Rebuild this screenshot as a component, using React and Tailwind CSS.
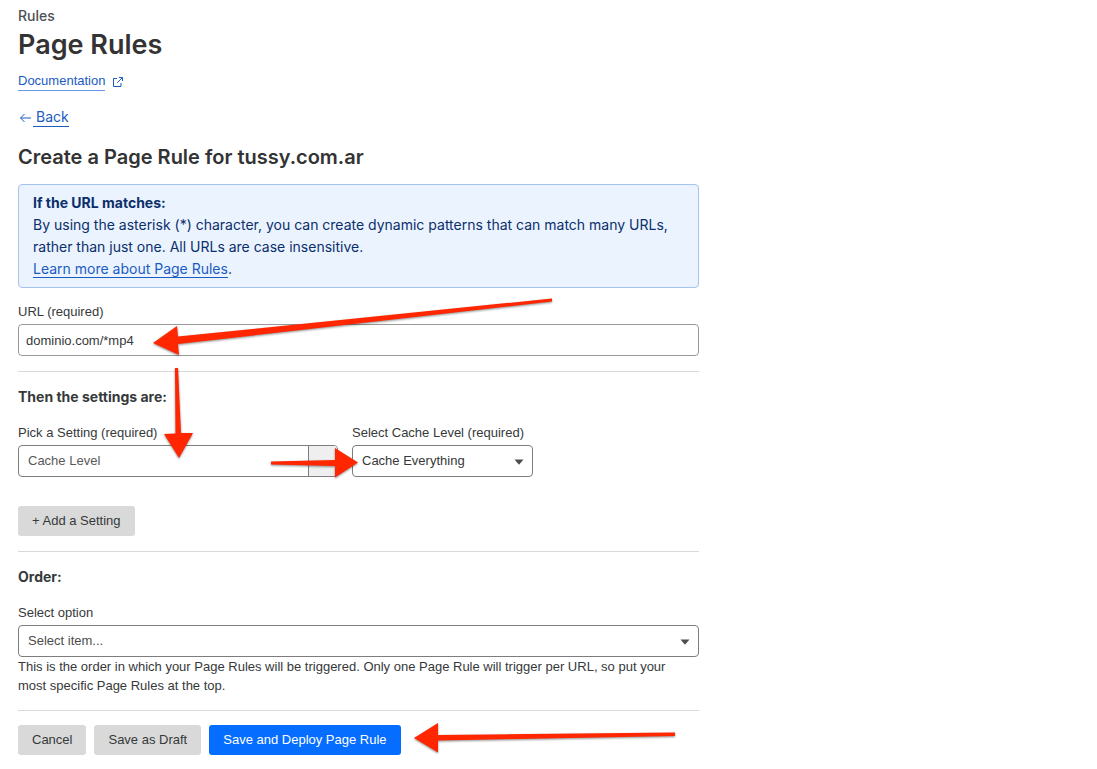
import { useState } from 'react';

const arrows = [
  '153,343 177,326 178,336.5 552,298.5 552,301.5 178,344 179,355',
  '175,368 178,368 181,433 193,433 179,458 164,434 175.5,433.5',
  '271,461.5 335,460 335,448 358,462.5 335,477.5 335,466 271,464.5',
  '414,738 438,723 438,735 675,732.5 675,736 438,740.5 438,752.5',
];

const small = "font-['Liberation_Sans',sans-serif] text-[13px]";
const gray = `h-[30px] rounded-[3px] bg-[#d9d9d9] px-[14px] leading-5 text-[#36393a] ${small}`;

function Caret() {
  return (
    <svg viewBox="0 0 10 6" className="pointer-events-none absolute right-[9px] top-[14px] h-[6px] w-[10px] fill-[#4d4d4d]">
      <path d="M0.5 0.5h9L5 5.8z" />
    </svg>
  );
}

function Field({ id, label, children }) {
  return (
    <div>
      <label htmlFor={id} className={`block leading-5 ${small}`}>
        {label}
      </label>
      <div className="relative mt-[2px]">{children}</div>
    </div>
  );
}

function Select({ id, options, className = '' }) {
  return (
    <select
      id={id}
      className={`block h-8 w-full appearance-none rounded-[4px] border border-[#7d7d7d] bg-white px-[9px] leading-5 ${small} ${className}`}
    >
      {options.map((option) => (
        <option key={option}>{option}</option>
      ))}
    </select>
  );
}

function Annotations() {
  return (
    <svg
      width="700"
      height="769"
      viewBox="0 0 700 769"
      aria-hidden="true"
      className="pointer-events-none absolute left-0 top-0 fill-[#ff2600] drop-shadow-[0_1px_1px_rgba(0,0,0,0.45)]"
    >
      {arrows.map((points) => (
        <polygon key={points} points={points} />
      ))}
    </svg>
  );
}

export default function App() {
  const [url, setUrl] = useState('dominio.com/*mp4');

  return (
    <div className="relative min-h-screen bg-white font-['Inter',sans-serif] text-[#36393a]">
      <main className="max-w-[717px] px-[18px] pb-[14px] pt-[6px]">
        <p className="text-sm leading-5 font-medium text-[#4d5052]">Rules</p>
        <h1 className="text-[27px] leading-[38px] font-semibold text-[#333]">Page Rules</h1>
        <div className="mt-2 flex items-center gap-2 text-[#1a5bc4]">
          <a href="#docs" className={`border-b border-[#6b9ae6] leading-[18px] ${small}`}>
            Documentation
          </a>
          <svg viewBox="0 0 10 10" className="h-[10px] w-[10px] fill-none stroke-current">
            <path d="M4 1.5H0.5v8h7.5V6M6 0.5h3.5V4M9.2 0.8L4.2 5.8" />
          </svg>
        </div>
        <div className="mt-[17px] flex items-center text-[#1a5bc4]">
          <svg viewBox="0 0 15 12" className="h-[12px] w-[15px] fill-none stroke-current">
            <path d="M13 6H2.5M6.5 2L2.5 6l4 4" />
          </svg>
          <a href="#back" className="border-b border-current pl-[3px] text-sm leading-[18px]">
            Back
          </a>
        </div>
        <h2 className="mt-4 text-xl leading-7 font-semibold text-[#333]">Create a Page Rule for tussy.com.ar</h2>

        <section className="mt-[13px] rounded-[4px] border border-[#a3c4ef] bg-[#ebf3ff] px-[14px] py-[7px] text-sm leading-[22px] text-[#0a2f6b]">
          <h3 className="font-bold">If the URL matches:</h3>
          <p>
            By using the asterisk (*) character, you can create dynamic patterns that can match many URLs, rather than
            just one. All URLs are case insensitive.
          </p>
          <p>
            <a href="#learn" className="border-b border-current text-[#1a5bc4]">
              Learn more about Page Rules
            </a>
            .
          </p>
        </section>

        <form onSubmit={(e) => e.preventDefault()}>
          <div className="mt-[14px]">
            <Field id="url" label="URL (required)">
              <input
                id="url"
                type="text"
                value={url}
                onChange={(e) => setUrl(e.target.value)}
                className={`block h-8 w-full rounded-[4px] border border-[#999] bg-white px-[7px] leading-5 ${small}`}
              />
            </Field>
          </div>

          <hr className="mt-[15px] border-[#d9d9d9]" />

          <h3 className="mt-[14px] text-sm leading-[22px] font-bold">Then the settings are:</h3>
          <div className="mt-[15px] flex flex-wrap gap-[14px]">
            <div className="w-80">
              <Field id="setting" label="Pick a Setting (required)">
                <Select id="setting" options={['Cache Level']} className="text-[#595959]" />
                <span className="pointer-events-none absolute inset-y-px right-px w-[29px] rounded-r-[3px] border-l border-[#7d7d7d] bg-[#efefef]" />
              </Field>
            </div>
            <div className="w-[181px]">
              <Field id="level" label="Select Cache Level (required)">
                <Select id="level" options={['Cache Everything']} />
                <Caret />
              </Field>
            </div>
          </div>
          <button type="button" className={`mt-[29px] block ${gray}`}>
            + Add a Setting
          </button>

          <hr className="mt-[15px] border-[#d9d9d9]" />

          <h3 className="mt-[14px] text-sm leading-[22px] font-bold">Order:</h3>
          <div className="mt-[15px]">
            <Field id="order" label="Select option">
              <Select id="order" options={['Select item...']} className="text-[#4d4d4d]" />
              <Caret />
            </Field>
          </div>
          <p className={`pr-4 leading-[19px] ${small}`}>
            This is the order in which your Page Rules will be triggered. Only one Page Rule will trigger per URL, so
            put your most specific Page Rules at the top.
          </p>

          <hr className="mt-[15px] border-[#d9d9d9]" />

          <div className="mt-[14px] flex flex-wrap gap-2">
            <button type="button" className={gray}>
              Cancel
            </button>
            <button type="button" className={gray}>
              Save as Draft
            </button>
            <button type="submit" className={`h-[30px] rounded-[3px] bg-[#056dff] px-[14px] leading-5 text-white ${small}`}>
              Save and Deploy Page Rule
            </button>
          </div>
        </form>
      </main>
      <Annotations />
    </div>
  );
}
